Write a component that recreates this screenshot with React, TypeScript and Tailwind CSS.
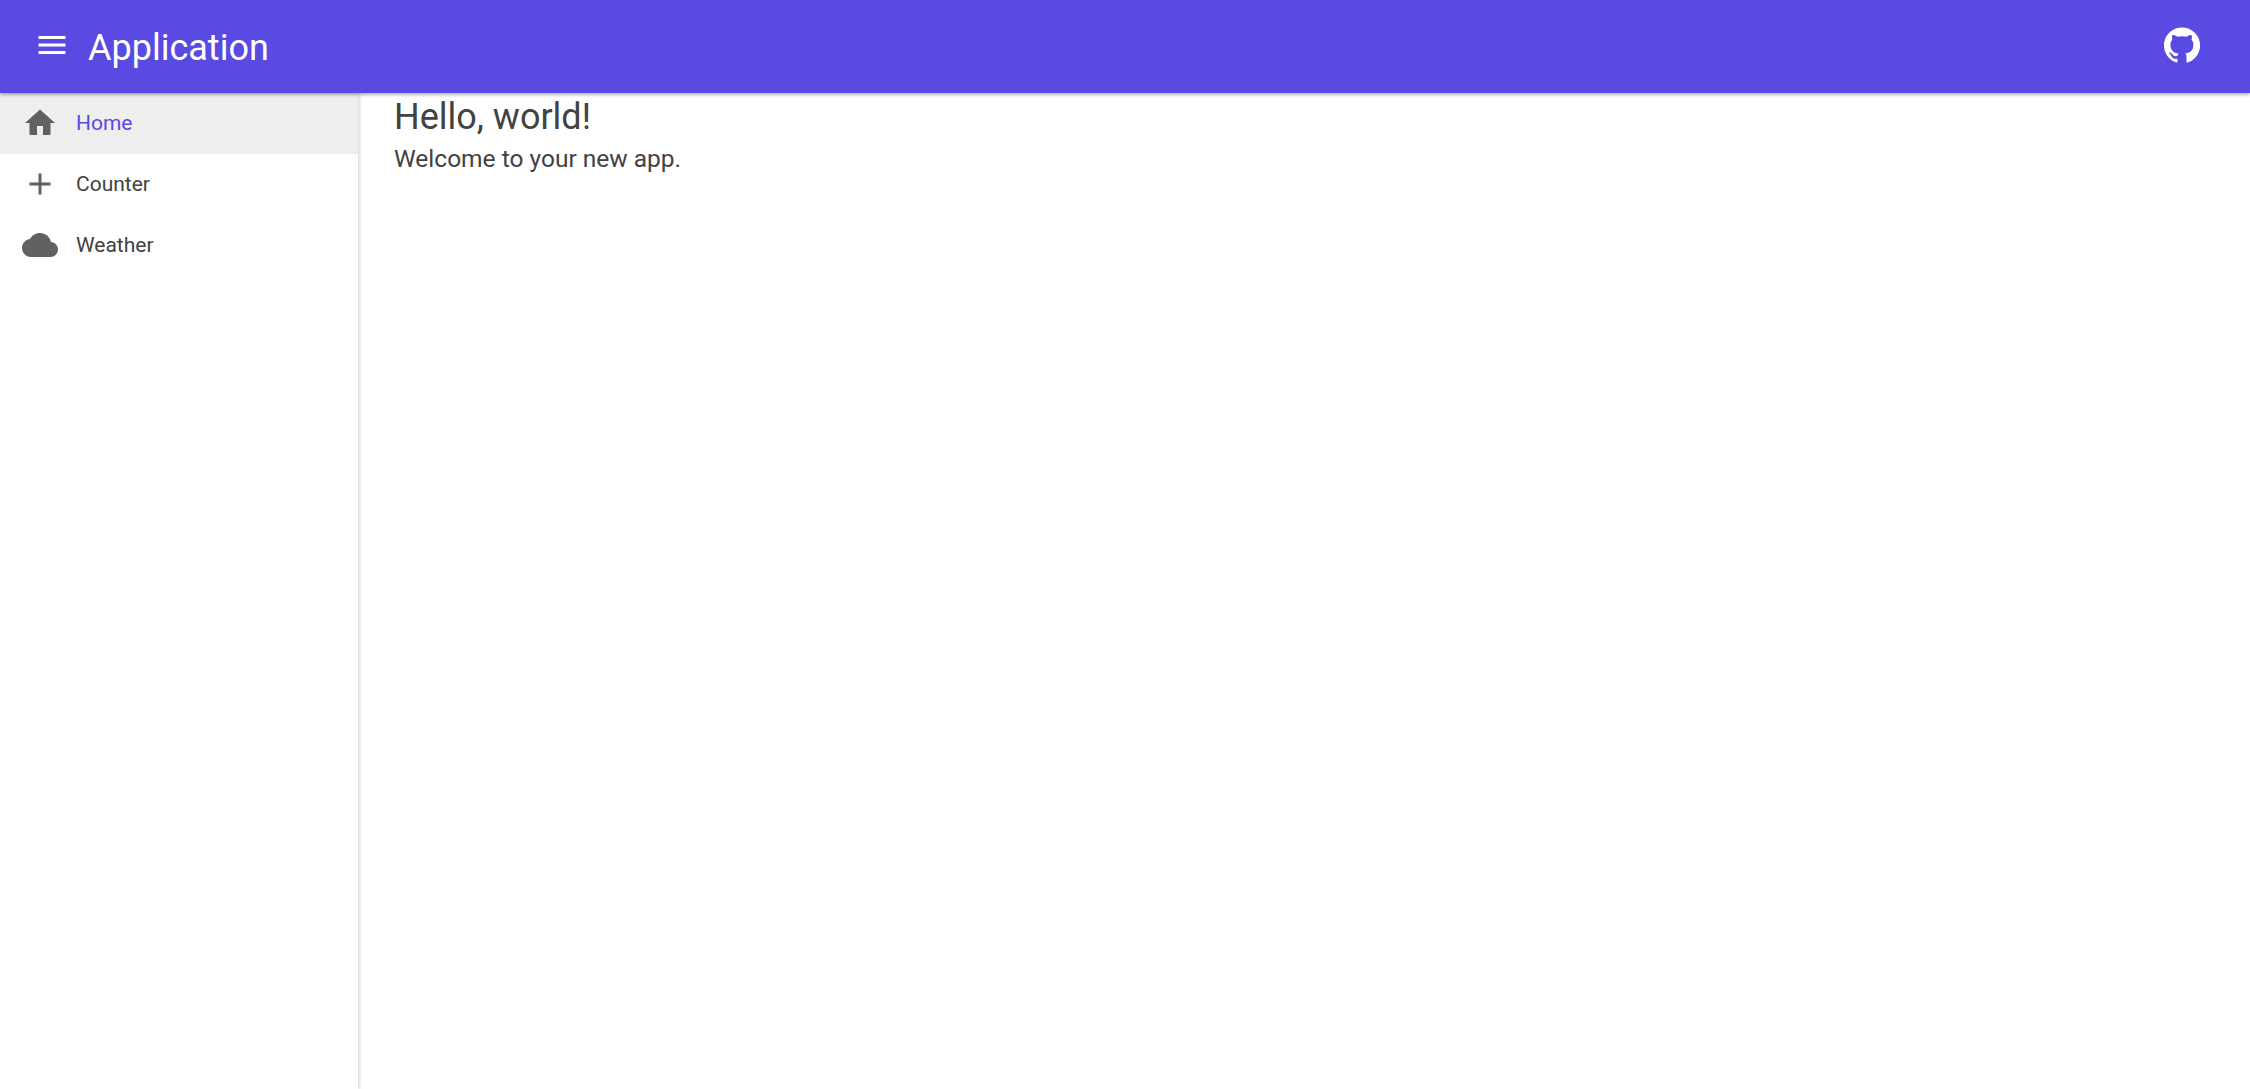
export default function App() {
  const rows = [
    { label: "Home", active: true, d: "M10 20v-6h4v6h5v-8h3L12 3 2 12h3v8z" },
    { label: "Counter", active: false, d: "M19 13h-6v6h-2v-6H5v-2h6V5h2v6h6v2z" },
    {
      label: "Weather",
      active: false,
      d: "M19.35 10.04C18.67 6.59 15.64 4 12 4 9.11 4 6.6 5.64 5.35 8.04 2.34 8.36 0 10.91 0 14c0 3.31 2.69 6 6 6h13c2.76 0 5-2.24 5-5 0-2.64-2.05-4.78-4.65-4.96z",
    },
  ];
  return (
    <div className="h-[1089px] w-[2250px] overflow-hidden flex flex-col bg-white font-['Roboto',sans-serif] text-[#424242]">
      <header className="relative z-20 h-[93px] shrink-0 flex items-center bg-[#594ae2] text-white shadow-[0_2px_3px_rgba(0,0,0,0.3)] pl-[34px] pr-[50px]">
        <svg viewBox="0 0 24 24" className="w-[36px] h-[36px] fill-current -mt-[3px]">
          <path d="M3 18h18v-2H3v2zm0-5h18v-2H3v2zm0-7v2h18V6H3z" />
        </svg>
        <span className="ml-[18px] text-[36px] leading-[48px] mt-[2px]">Application</span>
        <svg viewBox="0 0 24 24" className="ml-auto w-[36px] h-[36px] fill-current -mt-[3px]">
          <path d="M12 .3a12 12 0 0 0-3.8 23.4c.6.1.8-.3.8-.6v-2c-3.3.7-4-1.6-4-1.6-.6-1.4-1.4-1.8-1.4-1.8-1-.7.1-.7.1-.7 1.2 0 1.9 1.2 1.9 1.2 1 1.8 2.8 1.3 3.5 1 0-.8.4-1.3.7-1.6-2.7-.3-5.5-1.3-5.5-6 0-1.2.5-2.3 1.3-3.1-.2-.4-.6-1.6 0-3.2 0 0 1-.3 3.4 1.2a11.5 11.5 0 0 1 6 0c2.3-1.5 3.3-1.2 3.3-1.2.6 1.6.2 2.8 0 3.2.9.8 1.3 1.9 1.3 3.2 0 4.6-2.8 5.6-5.5 5.9.5.4.9 1 .9 2.2v3.3c0 .3.1.7.8.6A12 12 0 0 0 12 .3" />
        </svg>
      </header>
      <div className="flex flex-1 min-h-0">
        <nav className="relative z-10 w-[358px] shrink-0 bg-white shadow-[1px_0_4px_rgba(0,0,0,0.2)]">
          {rows.map((r) => (
            <div
              key={r.label}
              className={`h-[61px] flex items-center pl-[22px] pb-[2px] ${r.active ? "bg-[#eeeeee]" : "bg-white"}`}
            >
              <svg viewBox="0 0 24 24" className="w-[36px] h-[36px] fill-[#616161]">
                <path d={r.d} />
              </svg>
              <span
                className={`ml-[18px] text-[21px] leading-[30px] ${r.active ? "text-[#594ae2]" : "text-[#424242]"}`}
              >
                {r.label}
              </span>
            </div>
          ))}
        </nav>
        <main className="flex-1 pl-[36px] pt-[2px]">
          <h1 className="text-[36px] leading-[44px] font-normal">Hello, world!</h1>
          <p className="text-[24.5px] leading-[40px]">Welcome to your new app.</p>
        </main>
      </div>
    </div>
  );
}
